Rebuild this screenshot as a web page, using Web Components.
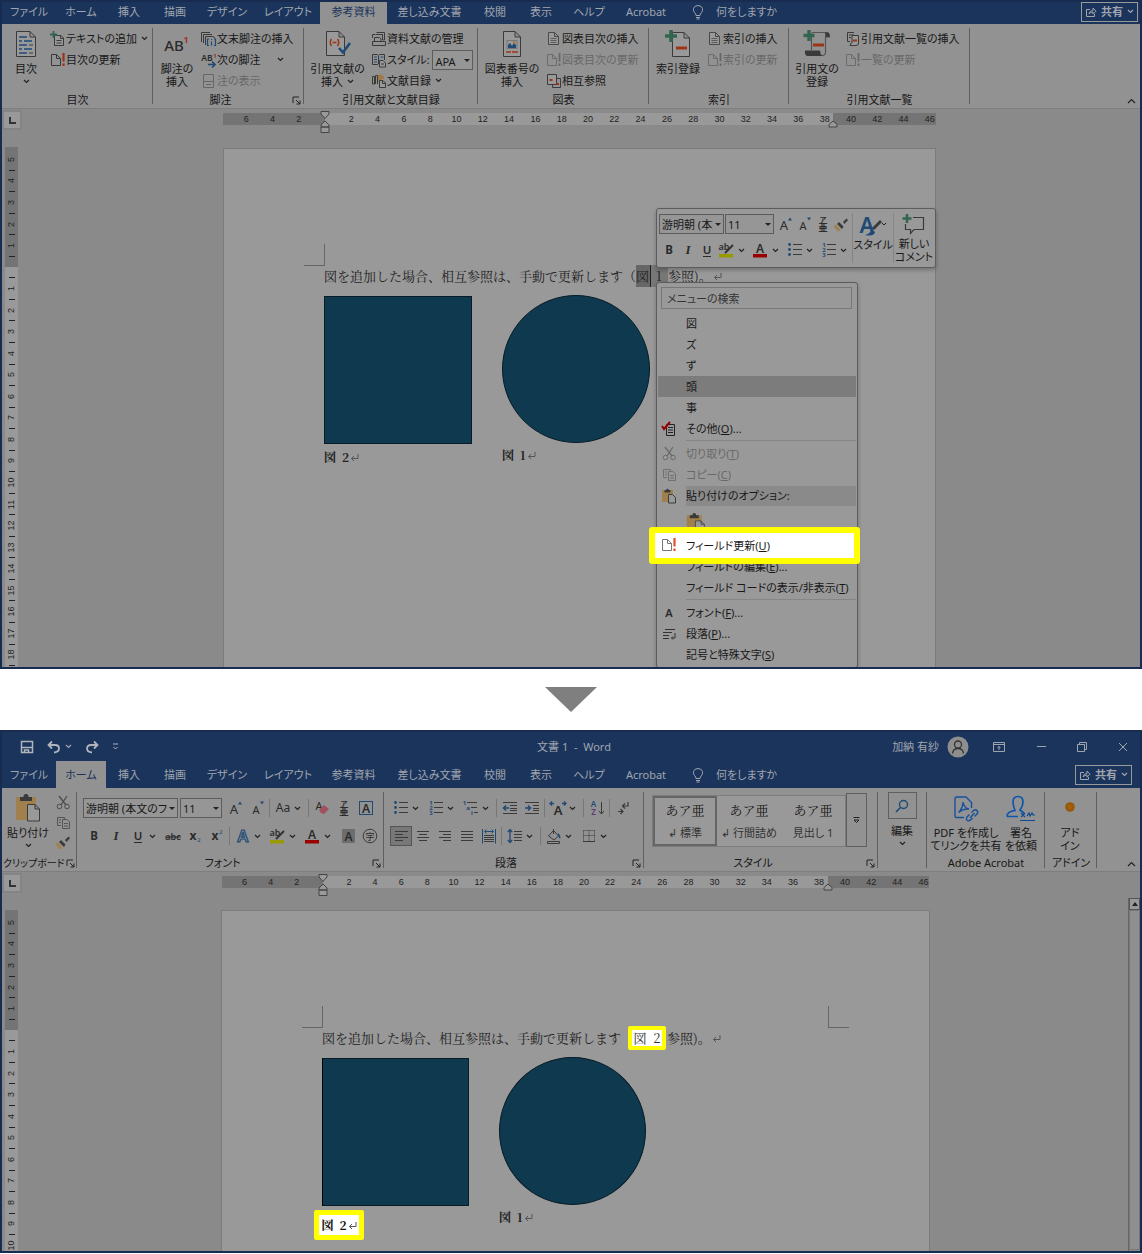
<!DOCTYPE html>
<html lang="ja">
<head>
<meta charset="utf-8">
<title>相互参照の更新</title>
<style>
body{margin:0;background:#fff;color:#181818;font:11px/13px "Noto Sans","Noto Sans CJK JP",sans-serif;font-feature-settings:"palt"}
</style>
</head>
<body>
<word-window>
  <tab-bar slot="head" active="参考資料" style="--h:22px;--edge:2px;--lift:3px"></tab-bar>
  <ribbon-bar slot="head">
    <ribbon-group label="目次" style="--w:151px;--big:48px">
      <big-command icon="toc" lines="目次" drop></big-command>
      <command-list items="addtext|テキストの追加|drop;update|目次の更新"></command-list>
    </ribbon-group>
    <ribbon-group label="脚注" launcher style="--w:151px;--big:48px">
      <big-command icon="ab1" lines="脚注の|挿入"></big-command>
      <command-list items="endnote|文末脚注の挿入;nextnote|次の脚注|wide;shownote|注の表示|off"></command-list>
    </ribbon-group>
    <ribbon-group label="引用文献と文献目録" style="--w:174px;--big:67px">
      <big-command icon="cite" lines="引用文献の|挿入" drop="inline"></big-command>
      <command-list items="sources|資料文献の管理;stylebook|スタイル:|apa;biblio|文献目録|drop"></command-list>
    </ribbon-group>
    <ribbon-group label="図表" style="--w:171px;--big:68px">
      <big-command icon="figure" lines="図表番号の|挿入"></big-command>
      <command-list items="page|図表目次の挿入;updateoff|図表目次の更新|off;crossref|相互参照"></command-list>
    </ribbon-group>
    <ribbon-group label="索引" style="--w:140px;--big:58px">
      <big-command icon="indexmark" lines="索引登録"></big-command>
      <command-list items="page|索引の挿入;updateoff|索引の更新|off"></command-list>
    </ribbon-group>
    <ribbon-group label="引用文献一覧" style="--w:181px;--big:56px">
      <big-command icon="citemark" lines="引用文の|登録"></big-command>
      <command-list items="authority|引用文献一覧の挿入;updateoff|一覧の更新|off"></command-list>
    </ribbon-group>
  </ribbon-bar>
  <h-ruler slot="head" style="--w:713px;--from:102px;--to:610px;--over:-7px;--bar:3px"></h-ruler>
  <doc-area style="--h:536px;--side:4px" cells="48">
    <doc-page style="--w:711px;--top:18px;--fig:148px;--between:30px">
      <span>図を追加した場合、相互参照は、手動で更新します（</span><field-ref>図&nbsp; 1</field-ref><span>参照)。</span><return-mark></return-mark>
      <figure-block slot="figures" shape="square"><b>図&nbsp; 2</b><return-mark></return-mark></figure-block>
      <figure-block slot="figures" shape="circle"><b>図&nbsp; 1</b><return-mark></return-mark></figure-block>
    </doc-page>
  </doc-area>
  <mini-toolbar slot="float"></mini-toolbar>
  <context-menu slot="float"></context-menu>
</word-window>
<step-arrow></step-arrow>
<word-window>
  <title-bar slot="head"></title-bar>
  <tab-bar slot="head" active="ホーム" style="--h:27px;--edge:8px"></tab-bar>
  <ribbon-bar slot="head" style="--rh:84px">
    <ribbon-group label="クリップボード" launcher style="--w:75px;--big:52px">
      <big-command icon="paste" lines="貼り付け" drop></big-command>
      <tool-rows rows="cut/copy/brush" style="--row:20px;--gap:0px;--tw:18px;--pad:0px"></tool-rows>
    </ribbon-group>
    <ribbon-group label="フォント" launcher style="--w:307px">
      <tool-rows rows="=游明朝 (本文のフォント):95 =11:42 growA shrinkA | Aa+ | eraser ruby boxA/B I U+ abc sub sup | outA+ hilite+ colorA+ shadeA circ"></tool-rows>
    </ribbon-group>
    <ribbon-group label="段落" launcher style="--w:260px">
      <tool-rows rows="bullets+ numbers+ multi+ | outdent indent | width+ | sort | marks/left! center right justify dist | spacing+ | bucket+ borders+"></tool-rows>
    </ribbon-group>
    <ribbon-group label="スタイル" launcher style="--w:234px">
      <style-gallery></style-gallery>
    </ribbon-group>
    <ribbon-group label="" style="--w:49px;--big:48px">
      <big-command icon="search" lines="編集" drop boxed></big-command>
    </ribbon-group>
    <ribbon-group label="Adobe Acrobat" style="--w:118px;--big:78px">
      <big-command icon="pdf" lines="PDF を作成し|てリンクを共有"></big-command>
      <big-command icon="sign" lines="署名|を依頼" style="--big:32px"></big-command>
    </ribbon-group>
    <ribbon-group label="アドイン" style="--w:52px;--big:50px">
      <big-command icon="dot" lines="アド|イン"></big-command>
    </ribbon-group>
  </ribbon-bar>
  <h-ruler slot="head" style="--w:707px;--from:101px;--to:606px;--over:-8px;--bar:12px"></h-ruler>
  <doc-area style="--h:357px" cells="31" scroll>
    <doc-page style="--w:707px;--top:17px;--fig:147px;--between:30px">
      <span>図を追加した場合、相互参照は、手動で更新します</span><call-out>図&nbsp; 2</call-out><span>参照)。</span><return-mark></return-mark>
      <figure-block slot="figures" shape="square" caret><call-out tall><b>図&nbsp; 2</b><return-mark></return-mark></call-out></figure-block>
      <figure-block slot="figures" shape="circle"><b>図&nbsp; 1</b><return-mark></return-mark></figure-block>
    </doc-page>
  </doc-area>
</word-window>
<script>
const K='#3a3a3a', B='#1f4a75', R='#9c3518', G='#326650', Y='#a3753a';
const doc=(c=K)=>`<path d="M3.500 1.500H9.500L13.500 5.500V14.500H3.500ZM9.500 1.500V5.500H13.500" fill="#999" stroke="${c}"/>`;
const t=(s,x,y,size,extra='')=>`<text x="${x}" y="${y}" font-size="${size}" text-anchor="middle" font-family="Noto Sans,Noto Sans CJK JP,sans-serif" fill="#2b2b2b" ${extra}>${s}</text>`;
const lines=(a,c=K)=>`<path d="${a.map(([x,y,w])=>`M${x} ${y}h${w}`).join('')}" stroke="${c}" fill="none"/>`;
// name: [width, height, viewBox size, drawing]
const ICONS={
  chev:[7,5,'7 5','<path d="M1 1 3.500 3.500 6 1" fill="none" stroke="#222" stroke-width="1.200"/>'],
  up:[9,6,'9 6','<path d="M1 5 4.500 1.500 8 5" fill="none" stroke="#222" stroke-width="1.200"/>'],
  launch:[9,9,'9 9','<path d="M1 7V1H7M4 4 8 8M8 4.500V8H4.500" fill="none" stroke="#222"/>'],
  toc:[22,28,'22 28',`<path d="M1.500 1.500H15L20.500 7V26.500H1.500ZM15 1.500V7H20.500" fill="#999" stroke="${K}"/><path d="M4 7h8M4 11h3M9 11h8M4 15h8M4 19h3M9 19h8M4 23h8" stroke="${B}" stroke-width="1.400"/><path d="M14 15h4M14 23h4" stroke="${K}"/>`],
  ab1:[26,22,'26 22',t('AB',10,18,15,'font-weight="500"')+t('1',22,10,9,`style="fill:${R}" font-weight="700"`)],
  cite:[26,28,'26 28',`<path d="M1.500 1.500H14L19.500 7V25.500H1.500ZM14 1.500V7H19.500" fill="#999" stroke="${K}"/><path d="M6.500 9Q4 12.500 6.500 16M12.500 9Q15 12.500 12.500 16M7.500 12.500h4" fill="none" stroke="${R}" stroke-width="1.500"/><path d="M14 18 18 22.500 25 13" fill="none" stroke="${B}" stroke-width="2.600"/>`],
  figure:[20,28,'20 28',`<path d="M1.500 1.500H13L18.500 7V26.500H1.500ZM13 1.500V7H18.500" fill="#999" stroke="${K}"/><rect x="5" y="10.500" width="10" height="8" fill="#999" stroke="#777"/><path d="M6 18V15l2-2 2 3 2-3 2 2v3Z" fill="${B}"/><circle cx="12" cy="12.500" r="1.200" fill="${Y}"/><path d="M4 22h5M10 22h6" stroke="${R}" stroke-width="1.300"/>`],
  indexmark:[26,28,'26 28',`<path d="M7.500 2.500H19L24.500 8V26.500H7.500ZM19 2.500V8H24.500" fill="#999" stroke="${K}"/><path d="M6 0V12M0 6H12" stroke="${G}" stroke-width="3.600"/><path d="M11 18h11" stroke="${R}" stroke-width="3"/>`],
  citemark:[28,28,'28 28',`<path d="M9 2.500H24Q26.500 2.500 26.500 7H22.500V22Q22.500 25.500 19 25.500H5M8.500 3V20" fill="none" stroke="#555" stroke-width="1.200"/><path d="M2 20.500H17Q17 24 19.500 26H4Q1.500 25 2 20.500ZM22 2.500H25Q27 4 26.500 7H22.500Z" fill="${K}"/><path d="M6 0V11M.5 5.500H11.500" stroke="${G}" stroke-width="3.400"/><path d="M10 15h11" stroke="${R}" stroke-width="3"/>`],
  addtext:[16,16,'16 16',`<path d="M4.500 4.500H11L13.500 7V14.500H4.500ZM10.500 4.500V7.500H13.500" fill="#999" stroke="${K}"/><path d="M3.500 0V7M0 3.500H7" stroke="${G}" stroke-width="1.800"/><path d="M6.500 9.500h5M6.500 12h5" stroke="${K}"/>`],
  update:[16,16,'16 16',`<path d="M1.500 2.500H6.500L10.500 6.500V13.500H1.500ZM6.500 2.500V6.500H10.500" fill="none" stroke="${K}"/><path d="M13.500 1V9.500M13.500 11.500V14" stroke="${R}" stroke-width="2.200"/>`],
  updatehot:[16,16,'16 16',`<path d="M1.500 2.500H6.500L10.500 6.500V13.500H1.500ZM6.500 2.500V6.500H10.500" fill="none" stroke="#777"/><path d="M13.500 1V9.500M13.500 11.500V14" stroke="#e0512c" stroke-width="2.200"/>`],
  updateoff:[16,16,'16 16',`<path d="M1.500 2.500H6.500L10.500 6.500V13.500H1.500ZM6.500 2.500V6.500H10.500" fill="none" stroke="#6c6c6c"/><path d="M13.500 1V9.500M13.500 11.500V14" stroke="#686868" stroke-width="1.800"/>`],
  page:[16,16,'16 16',`<path d="M2.500 1.500H8.500L12.500 5.500V13.500H2.500ZM8.500 1.500V5.500H12.500" fill="#999" stroke="#4a4a4a"/>`+lines([[4.500,7.500,6],[4.500,9.500,6],[4.500,11.500,6]],'#5c5c5c')],
  endnote:[16,16,'16 16',`<path d="M.5 11V1.500H9M2.500 12V3.500H11M4.500 14V5.500H12L14 7" fill="none" stroke="${K}"/><path d="M8 8H6.500V14.500H8M13 8H14.500V14.500H13M10.500 10.500V14.500M10.500 8V9" fill="none" stroke="${B}" stroke-width="1.200"/>`],
  nextnote:[16,16,'16 16',t('AB',6,9,8.500,'font-weight="600"')+t('1',14,6,6,`style="fill:${R}" font-weight="700"`)+`<path d="M7 12.500H14M11 9.500 14 12.500 11 15.500" stroke="${B}" fill="none" stroke-width="1.700"/>`],
  shownote:[16,16,'16 16',`<path d="M2.500 1.500H12.500V14.500H2.500ZM2.500 8.500H12.500M5 11.500H10" stroke="#666" fill="none"/>`],
  sources:[16,16,'16 16',`<path d="M4 3.500H1.500V7M5.500 1.500H13.500V9H12M4.500 3.500H11.500V9M1.500 10.500H14.500V14.500H1.500ZM3.500 10V6.500H8.500L10 8V10" stroke="${K}" fill="none"/>`],
  stylebook:[16,16,'16 16',`<path d="M1.500 2.500H6.500L7.500 3.500 8.500 2.500H13.500V8M7.500 3.500V12M1.500 2.500V12.500H7" stroke="${K}" fill="none"/><path d="M3 5h3M3 7.500h3M3 10h3M9.500 5h3" stroke="${B}"/><path d="M8.500 8.500H12L14.500 11V15H8.500ZM10 12h3" fill="#999" stroke="${K}"/>`],
  biblio:[16,16,'16 16',`<path d="M1.500 11V3.500H3.500V11ZM4.500 11V2.500H6.500V11" stroke="${K}" fill="none"/><path d="M8 9V2.500H10V7M12 3V6" stroke="${Y}" stroke-width="1.600" fill="none"/><path d="M8.500 7.500H12L14.500 10V14.500H8.500ZM11.500 7.500V10.500H14.500" fill="#999" stroke="${K}"/>`],
  crossref:[16,16,'16 16',`<path d="M1.500 1.500H10.500V11.500H1.500Z" stroke="${K}" fill="#999"/><path d="M10.500 5.500H14.500V14.500H6.500V11.500" stroke="${K}" fill="none"/><path d="M3.500 7h3M10 11h3" stroke="${R}" stroke-width="2"/>`],
  authority:[16,16,'16 16',`<path d="M9 1.500H2.500V10.500H5M4 4h5M4 6.500h2" stroke="${K}" fill="none"/><path d="M7 4.500H13.500V12Q13.500 14.500 11 14.500H5Q5 12 7 12Z" fill="#999" stroke="${K}"/><path d="M8 9.500h4" stroke="${R}" stroke-width="2"/>`],
  paste:[26,28,'26 28',`<rect x="1" y="3" width="20" height="23" fill="#a0804c"/><path d="M5 7V3H8.500Q8.500 0 11 0T13.500 3H17V7Z" fill="${K}"/><path d="M12.500 10.500H20L24.500 15V27H12.500ZM20 10.500V15H24.500" fill="#999" stroke="${K}"/>`],
  pastesm:[16,16,'16 16',`<rect x="1" y="2" width="11" height="12" fill="#a0804c"/><path d="M3.500 4.500V2H5Q6.500 -.5 8 2H9.500V4.500Z" fill="${K}"/><path d="M7.500 6.500H11.500L14.500 9.500V15H7.500Z" fill="#999" stroke="${K}"/>`],
  cut:[15,15,'15 15','<path d="M3 1 10 10M11 1 5 10" stroke="#4c4c4c" stroke-width="1.300"/><g fill="none" stroke="#4c4c4c"><circle cx="3.500" cy="11.500" r="2.300"/><circle cx="11" cy="11.500" r="2.300"/></g>'],
  copy:[15,15,'15 15','<path d="M5 10.500H1.500V2.500H8.500V4M6.500 4.500H11L13.500 7V13.500H6.500ZM8 8.500h4M8 11h4M3 5h2M3 7.500h2" stroke="#555" fill="none"/>'],
  brush:[15,15,'15 15',`<path d="M1 7 7 13 4 14.500 0 10Z" fill="#a0804c"/><path d="M5 5 9.500 9.500 8 12 3 7ZM9 5 12.500 1.500 14 3 10.500 7Z" fill="${K}"/>`],
  growA:[16,16,'16 16',t('A',7,14,13)+`<path d="M11 4.500 13 1.500 15 4.500Z" fill="${B}"/>`],
  shrinkA:[16,16,'16 16',t('A',7,14,11)+`<path d="M11 1.500H15L13 4.500Z" fill="${B}"/>`],
  Aa:[18,16,'18 16',t('Aa',9,12,12)],
  eraser:[16,16,'16 16',t('A',5,10,11)+'<path d="M5 10 10 5 15 9 10 14 7 13Z" fill="#a0505c"/>'],
  ruby:[16,16,'16 16',t('ア',8,6,7,'font-weight="700"')+t('亜',8,15,9,'font-weight="700"')],
  boxA:[16,16,'16 16',`<rect x="1.500" y="1.500" width="13" height="13" fill="none" stroke="${B}"/>`+t('A',8,13,12,'font-weight="600"')],
  B:[12,16,'12 16',t('B',6,12,11.500,'font-weight="700"')],
  I:[12,16,'12 16',`<text x="6" y="12" text-anchor="middle" font-family="Liberation Serif,serif" font-size="13" font-weight="700" font-style="italic" fill="#2b2b2b">I</text>`],
  U:[12,16,'12 16',t('U',6,12,11.500,'font-weight="600"')+'<path d="M2 14.500h8" stroke="#2b2b2b"/>'],
  abc:[16,16,'16 16',t('abc',8,12,9,'font-weight="600"')+'<path d="M0 9h16" stroke="#2b2b2b"/>'],
  sub:[14,16,'14 16',t('x',5,12,12,'font-weight="700"')+t('2',11,14,6,`style="fill:${B}"`)],
  sup:[14,16,'14 16',t('x',5,12,12,'font-weight="700"')+t('2',11,6,6,`style="fill:${B}"`)],
  outA:[16,16,'16 16',`<text x="8" y="14" font-size="16" text-anchor="middle" font-family="Noto Sans" font-weight="600" fill="#999" stroke="${B}" stroke-width="1.200">A</text>`],
  hilite:[18,16,'18 16',t('ab',6,8,9,'font-weight="600"')+'<path d="M7 11 15 3" stroke="#333" stroke-width="2"/><rect x="1" y="12" width="14" height="3.500" fill="#999900"/>'],
  colorA:[18,16,'18 16',t('A',8,11,12,'font-weight="600"')+'<rect x="1" y="12" width="14" height="3.500" fill="#990000"/>'],
  shadeA:[16,16,'16 16','<rect x="2" y="1" width="13" height="14" fill="#6d6d6d"/>'+t('A',8.500,13,12,'font-weight="600"')],
  circ:[16,16,'16 16',`<circle cx="8" cy="8" r="6.800" fill="none" stroke="${K}"/>`+t('字',8,11.500,9)],
  bullets:[16,16,'16 16',lines([[6,2.500,9],[6,7.500,9],[6,12.500,9]])+`<g fill="${B}"><circle cx="2.500" cy="2.500" r="1.400"/><circle cx="2.500" cy="7.500" r="1.400"/><circle cx="2.500" cy="12.500" r="1.400"/></g>`],
  numbers:[16,16,'16 16',lines([[6,2.500,9],[6,7.500,9],[6,12.500,9]])+[1,2,3].map((n,i)=>t(n,3,5+i*5,6,`style="fill:${B}" font-weight="700"`)).join('')],
  multi:[16,16,'16 16',lines([[4,2.500,10],[8,7.500,6],[11,12.500,4]])+t('1',1.500,5,6,`style="fill:${B}" font-weight="700"`)+t('a',5,10,6,`style="fill:${B}" font-weight="700"`)+t('i',9,15,6,`style="fill:${B}" font-weight="700"`)],
  outdent:[16,16,'16 16',lines([[1,2.500,14],[8,5.500,7],[8,8.500,7],[8,10.500,7],[1,13.500,14]])+`<path d="M7 8H2M4 5.500 1.500 8 4 10.500" stroke="${B}" fill="none" stroke-width="1.500"/>`],
  indent:[16,16,'16 16',lines([[1,2.500,14],[9,5.500,6],[9,8.500,6],[9,10.500,6],[1,13.500,14]])+`<path d="M1 8H6M4 5.500 6.500 8 4 10.500" stroke="${B}" fill="none" stroke-width="1.500"/>`],
  width:[18,16,'18 16',t('A',9,15,13,'font-weight="600"')+`<path d="M5 3.500H1M3 1.500 1 3.500 3 5.500M13 3.500H17M15 1.500 17 3.500 15 5.500" stroke="${B}" fill="none" stroke-width="1.300"/>`],
  sort:[16,16,'16 16',t('A',4.500,7,8,`style="fill:${B}" font-weight="600"`)+t('Z',4.500,15,8,'style="fill:#5d3470" font-weight="600"')+`<path d="M12.500 2V14M10 11 12.500 14 15 11" stroke="${K}" fill="none"/>`],
  marks:[16,16,'16 16',`<path d="M13 2V6H8M10 3.500 7.500 6 10 8.500M3 11.500H8M5.500 9 8 11.500 5.500 14" stroke="${K}" fill="none" stroke-width="1.200"/>`],
  left:[16,16,'16 16',lines([[2,3.500,13],[2,6.500,8],[2,9.500,13],[2,12.500,8]])],
  center:[16,16,'16 16',lines([[2,3.500,12],[4,6.500,8],[2,9.500,12],[4,12.500,8]])],
  right:[16,16,'16 16',lines([[2,3.500,12],[6,6.500,8],[2,9.500,12],[6,12.500,8]])],
  justify:[16,16,'16 16',lines([[2,3.500,12],[2,6.500,12],[2,9.500,12],[2,12.500,12]])],
  dist:[16,16,'16 16',lines([[3,7.500,10],[3,9.500,10],[3,11.500,10],[3,13.500,10]])+`<path d="M1.500 1V15.500M14.500 1V15.500M4 3.500H12M5.500 1.500 3.500 3.500 5.500 5.500M10.500 1.500 12.500 3.500 10.500 5.500" stroke="${B}" fill="none"/>`],
  spacing:[16,16,'16 16',lines([[7,3.500,8],[7,6.500,8],[7,9.500,8],[7,12.500,8]])+`<path d="M3 1.500V14.500M.8 4 3 1.500 5.200 4M.8 12 3 14.500 5.200 12" stroke="${B}" fill="none" stroke-width="1.300"/>`],
  bucket:[16,16,'16 16',`<path d="M2.500 8 7.500 2.500 12.500 8 8 12ZM7.500 6V1" stroke="${K}" fill="none"/><path d="M12 5Q15.500 8 14 11L12 8Z" fill="${B}"/><path d="M1.500 13.500H13.500V15.500H1.500Z" stroke="${K}" fill="none"/>`],
  borders:[16,16,'16 16',`<path d="M2.500 2.500V13M13.500 2.500V13M8 2.500V13M2.500 2.500H14M2.500 7.500H14" stroke="${K}" stroke-dasharray="1 1" fill="none"/><path d="M2 13.500H14" stroke="${K}"/>`],
  search:[16,16,'16 16',`<circle cx="9.500" cy="6.500" r="4" fill="none" stroke="${B}" stroke-width="1.400"/><path d="M6.500 9.500 2 14" stroke="${B}" stroke-width="1.600"/>`],
  pdf:[26,28,'26 28','<g fill="none" stroke="#17509c" stroke-width="1.400"><path d="M11 23.500H3.500Q2 23.500 2 22V4.500Q2 3 3.500 3H13L18.500 8.500V14M5.500 18.500Q10 14 10 8 11 14 16 15 10 14.500 5.500 18.500"/><path d="M16.500 20.500 14 23Q12.500 25.500 14.500 26.500 16 27.500 18 25.500L19.500 24M18.500 18.500 20.500 16.500Q22.500 15 24 16.500 25.500 18.500 24 20L21.500 22.500M17 24 21.500 19"/></g>'],
  sign:[28,28,'28 28','<path d="M0 22.500H11M0 22.500Q0 17.500 8 16.500 6 12 6 8 6 2.500 11 2.500T16 8Q16 12 13 16L17 19" fill="none" stroke="#0d55ad" stroke-width="1.700"/><path d="M14 19 18 23M18 19 14 23M20 22 22 19 23 22 25 19 26 21H28M13 26.500H28" stroke="#0d4796" fill="none" stroke-width="1.200"/>'],
  dot:[14,26,'14 26','<circle cx="7" cy="12" r="4.800" fill="#99590b"/><circle cx="7" cy="12" r="2" fill="#a4620b"/>'],
  bulb:[12,16,'12 16','<path d="M4 11.500Q4 10 2.500 8.500 1 6.500 1.500 4.500 2.500 1.500 6 1.500T10.500 4.500Q11 6.500 9.500 8.500 8 10 8 11.500ZM4 13.500H8M4.500 15H7.500" fill="none" stroke="#a0a5ae"/>'],
  share:[12,12,'12 12','<path d="M5 3.500H1.500V10.500H9.500V8M4 8Q4.500 4.500 8 4.500V2L11 5.200 8 8.200V6Q5.500 6 4 8Z" fill="none" stroke="#a0a5ae"/>'],
  wchev:[7,5,'7 5','<path d="M1 1 3.500 3.500 6 1" fill="none" stroke="#a0a5ae" stroke-width="1.200"/>'],
  save:[14,14,'14 14','<path d="M1.500 1.500H12.500V12.500H1.500ZM2 7.500H12M4.500 12.500V10H8.500V12.500" fill="none" stroke="#b0b4bb" stroke-width="1.500"/>'],
  undo:[14,14,'14 14','<path d="M5 1.500 1.500 5 5 8.500M1.500 5H8Q12 5 12 8.500T7 12.500" fill="none" stroke="#b0b4bb" stroke-width="1.800"/>'],
  redo:[14,14,'14 14','<path d="M9 1.500 12.500 5 9 8.500M12.500 5H6Q2 5 2 8.500T7 12.500" fill="none" stroke="#b0b4bb" stroke-width="1.800"/>'],
  more:[7,8,'7 8','<path d="M1 1H6" stroke="#b0b4bb"/><path d="M1.500 4 3.500 6 5.500 4" fill="none" stroke="#b0b4bb"/>'],
  gallerymore:[9,8,'9 8','<path d="M1.500 1.500H7.500M2 4 4.500 6.500 7 4Z" fill="none" stroke="#222"/>'],
  user:[22,22,'22 22','<circle cx="11" cy="11" r="10.500" fill="#8e8e8e"/><g fill="none" stroke="#333" stroke-width="1.300"><circle cx="11" cy="8.500" r="3.500"/><path d="M5.500 17.500Q6 12.500 11 12.500T16.500 17.500"/></g>'],
  ribbonopt:[12,10,'12 10','<path d="M.5 .5H11.500V9.500H.5ZM.5 2.500H11.500M6 8V4.500M4.500 6 6 4.500 7.500 6" fill="none" stroke="#a0a5ae"/>'],
  min:[10,10,'10 10','<path d="M1 4.500H10" stroke="#a0a5ae"/>'],
  max:[10,10,'10 10','<path d="M.5 2.500H7.500V9.500H.5ZM2.500 2V.5H9.500V7.500H8" fill="none" stroke="#a0a5ae"/>'],
  close:[10,10,'10 10','<path d="M1 1 9 9M9 1 1 9" stroke="#a0a5ae"/>'],
  check:[16,16,'16 16','<path d="M5.500 3.500H13.500V14.500H5.500ZM7 6.500h5M7 9h5M7 11.500h5" stroke="#222" fill="none"/><path d="M1 5 3 8 9 1" stroke="#900" stroke-width="2" fill="none"/>'],
  fontA:[16,16,'16 16',t('A',8,12,11,'font-weight="600"')],
  para:[16,16,'16 16','<path d="M4 3.500H14M2 6.500H11M2 9.500H8M2 12.500H8M14 7V12H10.500M12 10.500 10.500 12 12 13.500" stroke="#333" fill="none"/>'],
  styleA:[28,24,'28 24',`<text x="8" y="19" font-size="22" text-anchor="middle" font-family="Noto Sans" font-weight="600" fill="${B}">A</text><path d="M14 15 22 7" stroke="${K}" stroke-width="3"/><path d="M6 21Q11 20 12 16L16 18Q15 23 6 21Z" fill="${B}"/><path d="M23 9 25 11 27 9" stroke="#222" fill="none"/>`],
  comment:[24,22,'24 22',`<path d="M11 3.500H21.500V15.500H12L8.500 19.500V15.500H3.500V10" fill="none" stroke="${K}" stroke-width="1.200"/><path d="M5 0V9M.5 4.500H9.500" stroke="${G}" stroke-width="2.600"/>`]
};
const svg=(n,k=1)=>{const [w,h,v,d]=ICONS[n];return `<svg width="${w*k}" height="${h*k}" viewBox="0 0 ${v}" aria-hidden="true">${d}</svg>`};
const BASE=`:host,*{box-sizing:border-box}:host{display:block}button{font:inherit;font-feature-settings:inherit;color:inherit;background:none;border:0;padding:0;margin:0;white-space:nowrap}svg{display:block;flex:none;overflow:visible}`;
const define=(tag,css,render)=>customElements.define(tag,class extends HTMLElement{
  connectedCallback(){
    if(this.shadowRoot)return;
    this.attachShadow({mode:'open'}).innerHTML=`<style>${BASE}${css}</style>${render(this)}`;
  }
});

define('word-window',`:host{position:relative;border:2px solid #172c50;background:#8a8a8a;overflow:hidden}`,
  ()=>`<slot name="head"></slot><slot></slot><slot name="float"></slot>`);

define('title-bar',`:host{display:grid;grid-template-columns:1fr auto 1fr;align-items:center;height:29px;background:#1a345c;color:#a0a5ae;padding:0 12px 0 18px}
  .l,.r{display:flex;align-items:center}.l{gap:13px}.l button:nth-child(2){display:flex;align-items:center;gap:4px}.r{justify-content:flex-end;gap:31px}.who{display:flex;align-items:center;gap:8px}.who+button{margin-left:-7px}`,
  ()=>`<div class="l"><button aria-label="上書き保存">${svg('save')}</button><button aria-label="元に戻す">${svg('undo')}${svg('wchev')}</button><button aria-label="やり直し">${svg('redo')}</button><button aria-label="カスタマイズ">${svg('more')}</button></div>
  <div>文書 1&nbsp; -&nbsp; Word</div>
  <div class="r"><span class="who">加納 有紗${svg('user')}</span><button aria-label="リボンの表示">${svg('ribbonopt')}</button><button aria-label="最小化">${svg('min')}</button><button aria-label="元のサイズ">${svg('max')}</button><button aria-label="閉じる">${svg('close')}</button></div>`);

const TABS=[['ファイル',54],['ホーム',50],['挿入',46],['描画',46],['デザイン',58],['レイアウト',64],['参考資料',67],['差し込み文書',85],['校閲',46],['表示',46],['ヘルプ',50],['Acrobat',64]];
define('tab-bar',`:host{display:flex;height:var(--h);background:#1a345c;color:#a0a5ae;align-items:center;padding-right:var(--edge)}
  nav{display:flex;align-self:stretch}nav button{padding-bottom:var(--lift,0)}nav button.on{background:#929292;color:#1a345c}
  .ask{display:flex;align-items:center;gap:12px;margin-left:14px;padding-bottom:var(--lift,0)}
  .share{margin-left:auto;margin-bottom:var(--lift,0);display:flex;align-items:center;gap:4px;height:20px;padding:0 3px;border:1px solid #999;font-weight:700}`,
  e=>`<nav>${TABS.map(([n,w])=>`<button style="width:${w}px" class="${n===e.getAttribute('active')?'on':''}">${n}</button>`).join('')}</nav>
  <button class="ask">${svg('bulb')}何をしますか</button><button class="share">${svg('share')}共有${svg('wchev')}</button>`);

define('ribbon-bar',`:host{display:flex;height:var(--rh,85px);padding-top:4px;background:#929292;border-bottom:1px solid #7e7e7e}button{margin:auto 4px 4px auto}`,
  ()=>`<slot></slot><button aria-label="リボンを折りたたむ">${svg('up')}</button>`);

define('ribbon-group',`:host{position:relative;display:flex;flex-direction:column;width:var(--w);flex:none}
  :host::after{content:"";position:absolute;right:0;top:0;height:76px;width:1px;background:#5f5f5f}
  .body{display:flex;height:64px}.foot{position:relative;text-align:center;line-height:16px;white-space:nowrap}.foot button{position:absolute;right:3px;top:4px}
  :host([launcher]) .foot{padding-right:16px}
  :host([label="クリップボード"]) .foot{text-align:left;padding:0 0 0 1px;font-size:10px}:host([label="クリップボード"]) .foot button{right:2px}`,
  e=>`<div class="body"><slot></slot></div><div class="foot">${e.getAttribute('label')}${e.hasAttribute('launcher')?`<button aria-label="詳細">${svg('launch')}</button>`:''}</div>`);

define('big-command',`:host{width:var(--big);flex:none}button{display:flex;flex-direction:column;align-items:center;width:100%;line-height:13px}
  .ic{height:32px;display:flex;align-items:center;margin-bottom:2px}.ln{display:flex;align-items:center;gap:4px}.dn{height:13px;display:flex;align-items:center}
  :host([boxed]) .ic{width:29px;height:27px;border:1px solid #5f5f5f;justify-content:center;margin-bottom:5px}`,
  e=>{const L=e.getAttribute('lines').split('|'),d=e.getAttribute('drop');
  return `<button><span class="ic">${svg(e.getAttribute('icon'))}</span>${L.map((x,i)=>`<span class="ln">${x}${d==='inline'&&i===L.length-1?svg('chev'):''}</span>`).join('')}${d===''?`<span class="dn">${svg('chev')}</span>`:''}</button>`});

const combo=(label,value,w)=>`<span class="combo" style="width:${w}px"><select aria-label="${label}"><option>${value}</option></select></span>`;
const COMBO=`.combo{position:relative;display:inline-block;height:20px;flex:none}.combo select{display:block;appearance:none;font:inherit;color:inherit;width:100%;height:100%;border:1px solid #5c5c5c;background:#969696;padding:0 10px 0 2px;border-radius:0}.combo::after{content:"";position:absolute;right:3px;top:9px;border:3px solid transparent;border-top-color:#222;border-bottom:0}`;
define('command-list',`:host{line-height:21px}button{display:flex;align-items:center;height:21px}.off{color:#686868}.row{display:flex;align-items:center;gap:3px;height:21px}button .end{margin-left:4px;display:flex}.wide .end{margin-left:16px}${COMBO}`,
  e=>e.getAttribute('items').split(';').map(s=>{const [i,n,f='']=s.split('|');
  const b=`<button class="${f}"${f==='off'?' disabled':''}>${svg(i)}<span>${n}</span>${f==='drop'||f==='wide'?`<span class="end">${svg('chev')}</span>`:''}</button>`;
  return f==='apa'?`<div class="row">${b}${combo('スタイル','APA',41)}</div>`:b}).join(''));

define('tool-rows',`:host{display:flex;flex-direction:column;gap:var(--gap,8px);padding:var(--pad,6px) 0 0 var(--pad,6px)}
  .row{display:flex;align-items:center;height:var(--row,20px)}
  button{display:flex;align-items:center;justify-content:center;width:var(--tw,22px);height:20px;flex:none}
  button.split{width:var(--sw,35px);justify-content:flex-start}.split span{width:22px;display:flex;justify-content:center;flex:none}
  .on{background:#787878;border:1px solid #555}.bar{width:1px;height:18px;background:#777;margin:0 2px 0 1px;flex:none}${COMBO}.combo{margin-right:var(--cg,2px)}`,
  e=>e.getAttribute('rows').split('/').map(r=>`<div class="row">${r.replace(/ \((.*?)\)/,'_($1)').split(' ').map(k=>{
    if(k==='|')return '<span class="bar"></span>';
    if(k[0]==='='){const [v,w]=k.slice(1).split(':');return combo(v==='11'?'フォント サイズ':'フォント',v.replace('_',' '),w)}
    const n=k.replace(/[+!]/,'');
    return k.endsWith('+')?`<button class="split" aria-label="${n}"><span>${svg(n)}</span>${svg('chev')}</button>`:`<button class="${k.endsWith('!')?'on':''}" aria-label="${n}">${svg(n)}</button>`}).join('')}</div>`).join(''));

define('style-gallery',`:host{display:flex;padding:3px 0 0 8px}.set{display:flex;height:52px;border:1px solid #7c7c7c;background:#999}
  .set button{width:64px;display:flex;flex-direction:column;align-items:center;justify-content:center;gap:9px}.set b{font:13px/14px "Noto Serif CJK JP","Noto Sans CJK JP",serif}.set .on{border:2px solid #666}
  .set span{color:#333}.more{width:21px;height:54px;margin-top:-2px;border:1px solid #5f5f5f;display:flex;align-items:center;justify-content:center}`,
  ()=>`<div class="set">${['↲ 標準','↲ 行間詰め','見出し 1'].map((n,i)=>`<button class="${i?'':'on'}"><b>あア亜</b><span>${n}</span></button>`).join('')}</div><button class="more" aria-label="その他">${svg('gallerymore')}</button>`);

define('h-ruler',`:host{display:flex;height:22px;align-items:flex-start;padding-right:var(--bar,0px);font:9px/12px "Liberation Sans",sans-serif;color:#222}
  .tab{width:16px;height:16px;margin:3px 2px;background:#999;outline:2px solid #848484;display:flex;align-items:center;justify-content:center;flex:none}.tab::after{content:"";width:5px;height:5px;border:solid #333;border-width:0 0 2px 2px}
  .mid{flex:1;display:flex;justify-content:center}.bar{position:relative;width:var(--w);height:12px;margin-top:4px;background:linear-gradient(90deg,#747474 var(--from),#999 var(--from) var(--to),#747474 var(--to))}
  .clip{overflow:hidden;height:12px}.nums{display:grid;grid-template-columns:repeat(27,1fr);margin:0 var(--over) 0 10px;text-align:center}
  .m{position:absolute}.a{left:calc(var(--from) - 5px);top:-3px}.z{left:calc(var(--to) - 5px);top:7px}`,
  ()=>`<span class="tab"></span><div class="mid"><div class="bar"><div class="clip"><div class="nums">${Array.from({length:27},(_,i)=>`<span>${i===3?'':Math.abs(i*2-6)}</span>`).join('')}</div></div>
  <svg class="m a" width="10" height="24" viewBox="0 0 10 24"><path d="M1 1.500H9V4L5 8.500 1 4ZM5 11 9 15V17H1V15ZM1 17H9V22.500H1Z" fill="#999" stroke="#444"/></svg>
  <svg class="m z" width="10" height="8" viewBox="0 0 10 8"><path d="M5 1 9 4.500V7H1V4.500Z" fill="#999" stroke="#444"/></svg></div></div>`);

define('doc-area',`:host{display:flex;height:var(--h);overflow:hidden;padding-right:var(--side,0)}
  .v{width:13px;margin:16px 5px 0 3px;height:max-content;flex:none;background:linear-gradient(#747474 120px,#999 120px);padding-top:7px;font:9px/11px "Liberation Sans",sans-serif;color:#222}
  .g{display:grid;grid-auto-rows:1fr;height:calc(var(--n)*517px/48)}.g span{display:flex;align-items:center;justify-content:center;min-height:0}.g b{font-weight:400;transform:rotate(-90deg)}.g i{width:6px;height:1px;background:#222}
  .mid{flex:1;display:flex;justify-content:center;align-items:stretch}
  .sb{width:12px;margin-top:4px;background:#8a8a8a;border-left:1px solid #666;flex:none}.sb button{display:flex;width:11px;height:12px;align-items:center;justify-content:center;border:1px solid #555;background:#999}.sb button::after{content:"";border:3px solid transparent;border-bottom:4px solid #222;border-top:0}.sb div{height:340px;border:1px solid #777;background:#8f8f8f}`,
  e=>{const n=+e.getAttribute('cells');return `<div class="v"><div class="g" style="--n:${n}">${Array.from({length:n},(_,i)=>`<span>${i===10?'':i%2?'<i></i>':`<b>${Math.abs(5-i/2)}</b>`}</span>`).join('')}</div></div><div class="mid"><slot></slot></div>${e.hasAttribute('scroll')?'<div class="sb"><button aria-label="上へ"></button><div></div></div>':''}`});

define('doc-page',`:host{width:var(--w);flex:none;margin-top:var(--top);background:#999;outline:1px solid #7b7b7b;padding:95px 80px 0;font:13px/20px "Noto Serif CJK JP","Noto Sans CJK JP",serif;font-feature-settings:normal;color:#222}
  .c{display:flex;justify-content:space-between}.c i{width:21px;height:22px;border:solid #666;border-width:0 1px 1px 0}.c i+i{border-width:0 0 1px 1px}
  .t{display:flex;align-items:center;white-space:nowrap;margin-left:20px;height:20px}.f{display:flex;gap:var(--between);margin:9px 0 0 20px}`,
  ()=>`<div class="c"><i></i><i></i></div><div class="t"><slot></slot></div><div class="f"><slot name="figures"></slot></div>`);
define('return-mark',`:host{display:inline-flex;margin-left:1px}`,()=>`<svg width="9" height="9" viewBox="0 0 9 9"><path d="M8 1V5.500H1.500M4 3 1.500 5.500 4 8" fill="none" stroke="#555"/></svg>`);
define('field-ref',`:host{display:inline-block;background:linear-gradient(90deg,#666 14px,#222 14px 15px,#777 15px);height:22px;line-height:22px;width:32px;white-space:pre}`,()=>`<slot></slot>`);
define('figure-block',`:host{width:var(--fig);line-height:18px;font-size:12px}.s{height:148px;background:#0e394e;border:1px solid #071c27;margin-bottom:3px}:host([shape=circle]) .s{border-radius:50%}:host([shape=square]) .s{margin:1px 0 4px}
  .cap{display:flex;align-items:center;white-space:pre}:host([caret]) .s{border-left-color:#000}`,
  ()=>`<div class="s"></div><div class="cap"><slot></slot></div>`);
define('call-out',`:host{display:inline-flex;align-items:center;justify-content:center;height:24px;width:38px;margin:0 1px 0 7px;border:4px solid #ff0;border-radius:2px;background:#fff;color:#333;white-space:pre}
  :host([tall]){height:30px;width:50px;border-width:5px;margin:0 0 0 -8px;color:#111}`,()=>`<slot></slot>`);

define('mini-toolbar',`:host{position:absolute;left:654px;top:206px;width:280px;height:60px;border:1px solid #5c5c5c;border-radius:3px;background:#999;box-shadow:0 2px 4px #0004;display:flex;align-items:center}
  tool-rows{width:195px;align-self:stretch}.big{display:flex;flex-direction:column;align-items:center;border-left:1px solid #858585;height:50px;width:41px;line-height:13px}.big span{height:25px;display:flex;align-items:center}`,
  ()=>`<tool-rows rows="=游明朝 (本文のフォント):65 =11:49 growA shrinkA ruby brush/B I U hilite+ colorA+ bullets+ numbers+" style="--pad:5px;--gap:6px;--tw:19px;--sw:34px;--cg:1px;padding-left:2px"></tool-rows>
  <button class="big"><span>${svg('styleA')}</span>スタイル</button><button class="big"><span>${svg('comment')}</span>新しい<br>コメント</button>`);

const MENU=[['','図'],['','ズ'],['','ず'],['','頭','','on'],['','事'],['check','その他','O…'],'-',['cut','切り取り','T','off'],['copy','コピー','C','off'],['pastesm','貼り付けのオプション:','','head'],'p',['updatehot','フィールド更新','U','hot'],['','フィールドの編集','E…'],['','フィールド コードの表示/非表示','T'],'-',['fontA','フォント','F…'],['para','段落','P…'],['','記号と特殊文字','S']];
define('context-menu',`:host{position:absolute;left:654px;top:280px;width:202px;border:1px solid #5c5c5c;border-radius:3px;background:#999;box-shadow:0 2px 4px #0004;padding:4px 0 2px;z-index:1}
  input{display:block;width:191px;height:22px;margin:0 4px 4px;border:1px solid #777;background:#999;font:inherit;font-feature-settings:inherit;padding:0 5px}input::placeholder{color:#333;opacity:1}
  button,.p{display:flex;align-items:center;width:198px;height:21px;margin-left:1px;text-align:left;position:relative}.ic{width:28px;display:flex;justify-content:center;padding-right:6px;flex:none}
  .on{background:#7c7c7c}.off{color:#696969}.off .ic{opacity:.6}.head .tx{background:#8a8a8a;flex:1;line-height:20px}.p{height:28px;padding-left:28px;align-items:flex-end}
  hr{border:0;height:1px;background:#858585;margin:1px 1px 2px 29px}
  .hot{z-index:1;height:22px}.hot::before{content:"";position:absolute;inset:-7px -4px -8px -9px;border:6px solid #ff0;border-radius:3px;background:#fff;z-index:-1}`,
  ()=>`<input type="search" aria-label="メニューの検索" placeholder="メニューの検索">${MENU.map(m=>m==='-'?'<hr>':m==='p'?`<div class="p">${svg('paste',.75)}</div>`:`<button class="${m[3]||''}"><span class="ic">${m[0]?svg(m[0]):''}</span><span class="tx">${m[1]}${m[2]?`(<u>${m[2][0]}</u>)${m[2][1]?'...':''}`:''}</span></button>`).join('')}`);

define('step-arrow',`:host{display:flex;justify-content:center;padding:18px 0}`,()=>`<svg width="52" height="25" viewBox="0 0 52 25"><path d="M0 0H52L26 25Z" fill="#7f7f7f"/></svg>`);
</script>
</body>
</html>
